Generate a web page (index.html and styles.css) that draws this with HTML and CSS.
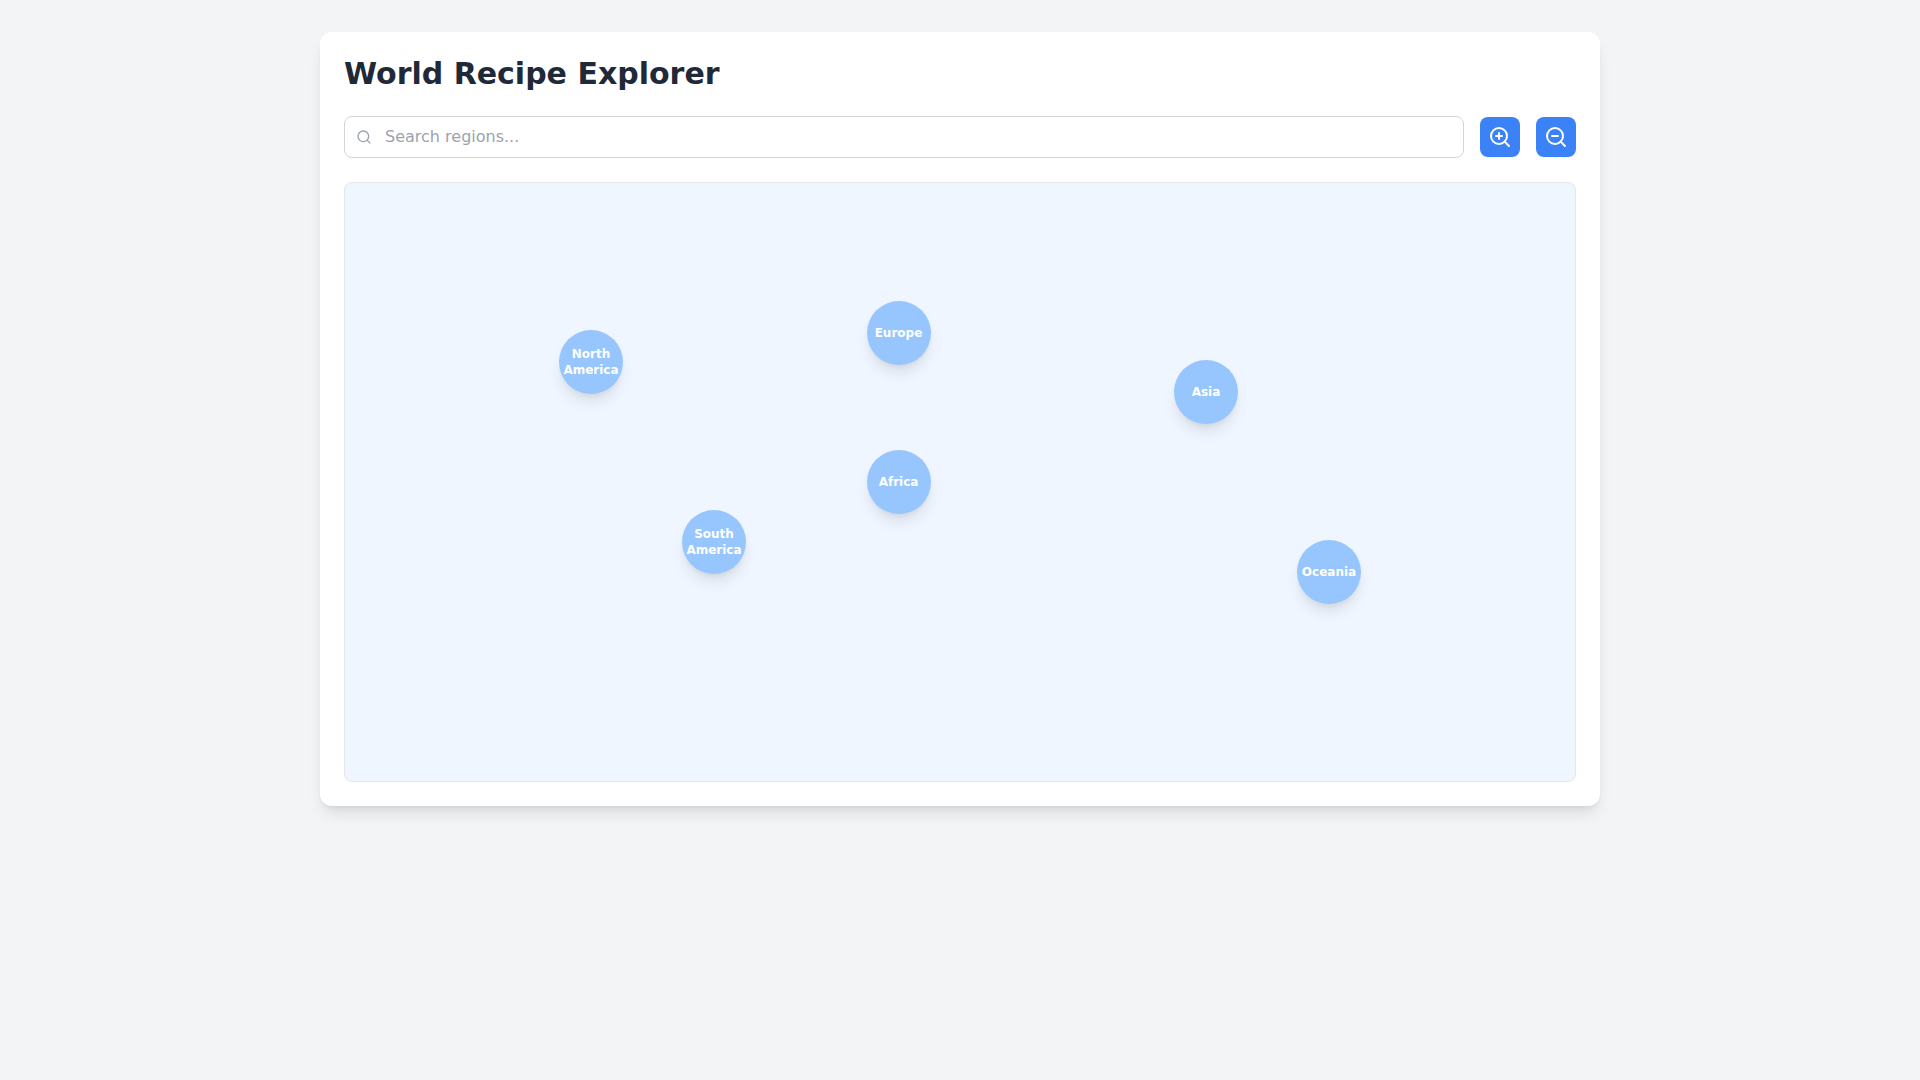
FILE: index.html
```html
<!DOCTYPE html>
<html lang="en">
<head>
<meta charset="utf-8">
<title>World Recipe Explorer</title>
<link rel="stylesheet" href="styles.css">
</head>
<body>
<main class="card">
  <h1 class="title">World Recipe Explorer</h1>
  <div class="toolbar">
    <div class="search">
      <svg class="search-icon" viewBox="0 0 24 24" fill="none" stroke="currentColor" stroke-width="2" stroke-linecap="round" stroke-linejoin="round"><circle cx="11" cy="11" r="8"/><line x1="21" y1="21" x2="16.65" y2="16.65"/></svg>
      <input class="search-input" type="text" placeholder="Search regions...">
    </div>
    <button class="zoom-btn" type="button" aria-label="Zoom in">
      <svg class="zoom-icon" viewBox="0 0 24 24" fill="none" stroke="currentColor" stroke-width="2" stroke-linecap="round" stroke-linejoin="round"><circle cx="11" cy="11" r="8"/><line x1="21" y1="21" x2="16.65" y2="16.65"/><line x1="11" y1="8" x2="11" y2="14"/><line x1="8" y1="11" x2="14" y2="11"/></svg>
    </button>
    <button class="zoom-btn" type="button" aria-label="Zoom out">
      <svg class="zoom-icon" viewBox="0 0 24 24" fill="none" stroke="currentColor" stroke-width="2" stroke-linecap="round" stroke-linejoin="round"><circle cx="11" cy="11" r="8"/><line x1="21" y1="21" x2="16.65" y2="16.65"/><line x1="8" y1="11" x2="14" y2="11"/></svg>
    </button>
  </div>
  <section class="map">
    <div class="pin pin-na">North America</div>
    <div class="pin pin-sa">South America</div>
    <div class="pin pin-eu">Europe</div>
    <div class="pin pin-af">Africa</div>
    <div class="pin pin-as">Asia</div>
    <div class="pin pin-oc">Oceania</div>
  </section>
</main>
</body>
</html>
```
FILE: styles.css
```css
* { box-sizing: border-box; }

html, body { margin: 0; }

body {
  min-height: 100vh;
  padding: 32px;
  background: #f3f4f6;
  font-family: "DejaVu Sans", sans-serif;
}

.card {
  max-width: 1280px;
  margin: 0 auto;
  padding: 24px;
  background: #fff;
  border-radius: 12px;
  box-shadow: 0 10px 15px -3px rgba(0, 0, 0, 0.1), 0 4px 6px -4px rgba(0, 0, 0, 0.1);
}

.title {
  margin: 0 0 24px;
  font-size: 30px;
  line-height: 36px;
  font-weight: 700;
  color: #1f2937;
}

.toolbar {
  display: flex;
  align-items: center;
  gap: 16px;
  margin-bottom: 24px;
}

.search {
  position: relative;
  flex: 1;
}

.search-icon {
  position: absolute;
  left: 12px;
  top: 13px;
  width: 16px;
  height: 16px;
  color: #9ca3af;
}

.search-input {
  display: block;
  width: 100%;
  height: 42px;
  padding: 7px 16px 9px 40px;
  border: 1px solid #d1d5db;
  border-radius: 8px;
  background: #fff;
  font: inherit;
  font-size: 16px;
  line-height: 24px;
  color: #1f2937;
  outline: none;
}

.search-input::placeholder {
  color: #9ca3af;
  opacity: 1;
}

.zoom-btn {
  display: flex;
  width: 40px;
  height: 40px;
  padding: 8px;
  border: 0;
  border-radius: 8px;
  background: #3b82f6;
  color: #fff;
}

.zoom-icon {
  display: block;
  width: 24px;
  height: 24px;
}

.map {
  position: relative;
  height: 600px;
  background: #eff6ff;
  border: 1px solid #e5e7eb;
  border-radius: 8px;
  overflow: hidden;
}

.pin {
  position: absolute;
  display: flex;
  align-items: center;
  justify-content: center;
  width: 64px;
  height: 64px;
  border-radius: 50%;
  background: #96c6fd;
  box-shadow: 0 10px 15px -3px rgba(0, 0, 0, 0.1), 0 4px 6px -4px rgba(0, 0, 0, 0.1);
  color: #fff;
  font-size: 12px;
  line-height: 16px;
  font-weight: 700;
  text-align: center;
  transform: translate(-50%, -50%);
}

.pin-na { left: 20%; top: 30%; }
.pin-sa { left: 30%; top: 60%; }
.pin-eu { left: 45%; top: 25%; }
.pin-af { left: 45%; top: 50%; }
.pin-as { left: 70%; top: 35%; }
.pin-oc { left: 80%; top: 65%; }
```
